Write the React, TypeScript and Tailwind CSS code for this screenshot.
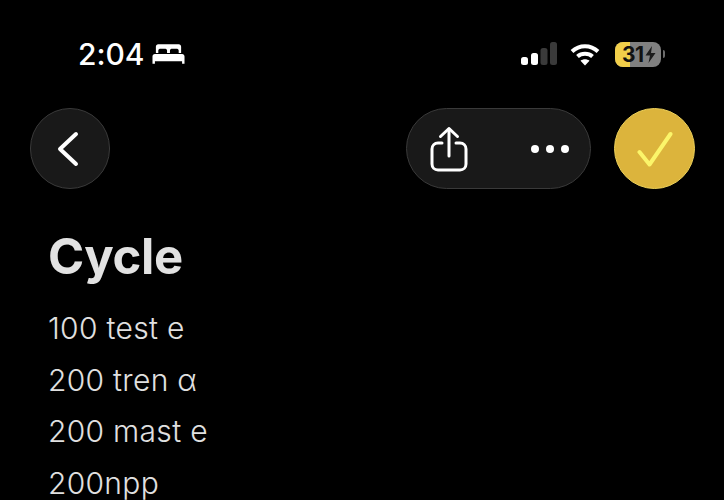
const lines = ['100 test e', '200 tren α', '200 mast e', '200npp']

function BedIcon() {
  return (
    <svg width="33" height="22" viewBox="0 0 34 22" fill="none" className="ml-[8px]">
      <path d="M4 10V3.500C4 2 5 1 6.500 1h21C29 1 30 2 30 3.500V10h-2.500V7.500C27.500 6 26.500 5.500 25 5.500h-4c-1.500 0-2.500.5-2.500 2V10h-3V7.500c0-1.500-1-2-2.500-2H9C7.500 5.500 6.500 6 6.500 7.500V10z" fill="white" />
      <path d="M3 11h28c1.500 0 2.500 1 2.500 2.500V21H31v-2.500H3V21H.5v-7.500C.5 12 1.500 11 3 11z" fill="white" />
    </svg>
  )
}

function SignalIcon() {
  return (
    <svg width="36" height="24" viewBox="0 0 36 24">
      <rect x="0" y="15" width="7" height="8" rx="2.500" fill="white" />
      <rect x="10" y="11" width="7" height="12" rx="2.500" fill="white" />
      <rect x="19.500" y="6" width="7" height="17" rx="2.500" fill="#3a3a3a" />
      <rect x="29" y="0" width="7" height="23" rx="2.500" fill="#3a3a3a" />
    </svg>
  )
}

function WifiIcon() {
  return (
    <svg width="30" height="24" viewBox="0 0 30 24" fill="none" stroke="white" strokeWidth="4">
      <path d="M2 9.500C9.500 2.500 20.500 2.500 28 9.500" />
      <path d="M7.500 14.500C11.500 10.800 18.500 10.800 22.500 14.500" />
      <path d="M15 23.500L10.500 18.800C13 16.800 17 16.800 19.500 18.800Z" fill="white" stroke="none" />
    </svg>
  )
}

function Battery() {
  return (
    <div className="flex items-center">
      <div className="relative flex h-[25px] w-[46px] items-center overflow-hidden rounded-[8px] bg-[#808080]">
        <div className="absolute inset-y-0 left-0 w-[15px] bg-[#f2cf4a]" />
        <span className="relative ml-[7px] text-[21px] font-bold leading-none tracking-[-0.5px] text-[#111]">31</span>
        <svg width="11" height="17" viewBox="0 0 11 17" className="relative ml-[1px]">
          <path d="M7 0L0.500 9.500H5L3.500 17L10.500 7H6z" fill="#1c1c1c" />
        </svg>
      </div>
      <div className="ml-[2px] h-[8px] w-[2px] rounded-r-sm bg-[#6b6b6b]" />
    </div>
  )
}

export default function App() {
  return (
    <div className="h-[500px] w-[724px] overflow-hidden bg-black font-['Inter',sans-serif] text-white">
      {/* status bar */}
      <div className="flex h-[108px] items-start justify-between pl-[78px] pr-[59px] pt-[37px]">
        <div className="flex h-[34px] items-center">
          <span className="text-[30px] font-medium leading-none tracking-[-0.1px]">2:04</span>
          <BedIcon />
        </div>
        <div className="flex h-[34px] items-center">
          <SignalIcon />
          <div className="ml-[13px]"><WifiIcon /></div>
          <div className="ml-[15px]"><Battery /></div>
        </div>
      </div>

      {/* toolbar */}
      <div className="flex items-center justify-between pl-[30px] pr-[29px]">
        <button className="flex h-[81px] w-[80px] items-center justify-center rounded-full border border-[#3a3a3a] bg-[#191919]">
          <svg width="24" height="36" viewBox="0 0 24 36" fill="none" stroke="white" strokeWidth="4" strokeLinecap="round" strokeLinejoin="round" className="-ml-[5px]">
            <path d="M20 3L4 18L20 33" />
          </svg>
        </button>
        <div className="flex items-center gap-[23px]">
          <div className="flex h-[81px] w-[185px] items-center justify-between rounded-full border border-[#3a3a3a] bg-[#191919] pl-[23px] pr-[21px]">
            <svg width="38" height="46" viewBox="0 0 38 46" fill="none" stroke="white" strokeWidth="3" strokeLinecap="round" strokeLinejoin="round">
              <path d="M12 17H8c-3.500 0-6 2.500-6 6v15c0 3.500 2.500 6 6 6h22c3.500 0 6-2.500 6-6V23c0-3.500-2.500-6-6-6h-4" />
              <path d="M19 30V3" />
              <path d="M10.500 10.500L19 2.500l8.500 8" />
            </svg>
            <div className="flex gap-[7px]">
              <div className="h-[8px] w-[8px] rounded-full bg-white" />
              <div className="h-[8px] w-[8px] rounded-full bg-white" />
              <div className="h-[8px] w-[8px] rounded-full bg-white" />
            </div>
          </div>
          <button className="flex h-[81px] w-[81px] items-center justify-center rounded-full border border-[#ecd05a] bg-[#dcb43c]">
            <svg width="36" height="36" viewBox="0 0 36 36" fill="none" stroke="#fbf56a" strokeWidth="4" strokeLinecap="round" strokeLinejoin="round">
              <path d="M2.500 21L12.500 33.500L33.500 3" />
            </svg>
          </button>
        </div>
      </div>

      {/* note */}
      <div className="pl-[48px] pt-[39px]">
        <h1 className="text-[49px] font-bold leading-[58px] tracking-[-0.3px] text-[#e2e2e2]">Cycle</h1>
        <div className="mt-[17px] flex flex-col">
          {lines.map((line) => (
            <p key={line} className="text-[30px] font-light leading-[51.500px] tracking-[0.3px] text-[#e0e0e0]">{line}</p>
          ))}
        </div>
      </div>
    </div>
  )
}
